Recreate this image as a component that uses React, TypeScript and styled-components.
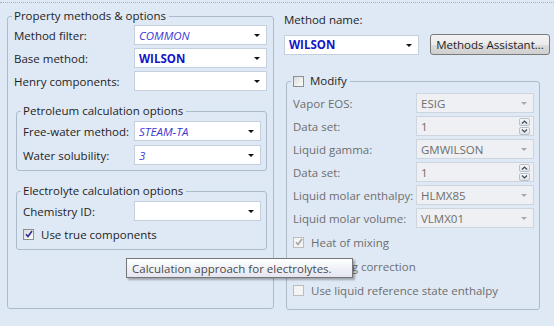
import styled, { createGlobalStyle } from 'styled-components';

const GlobalStyle = createGlobalStyle`
  html, body {
    margin: 0;
    padding: 0;
    background: #dfe9f5;
  }
`;

const Page = styled.div`
  position: relative;
  width: 554px;
  height: 326px;
  overflow: hidden;
  background: #dfe9f5;
  font-family: "Open Sans", "Noto Sans", sans-serif;
  font-size: 11.5px;
  color: #1e1e1e;
`;

const TopRule = styled.div`
  height: 2px;
  border-bottom: 1px dotted #9fb2c8;
`;

const Columns = styled.div`
  display: flex;
  gap: 10px;
  padding: 5px 0 0 7px;
`;

const LeftColumn = styled.div`
  width: 267px;
`;

const RightColumn = styled.div`
  flex: 1;
  display: flex;
  flex-direction: column;
  padding-top: 4px;
`;

const Group = styled.fieldset<{ $height?: number; $inset?: boolean }>`
  box-sizing: border-box;
  margin: 0;
  padding: 0 6px 4px 6px;
  border: 1px solid #adbccd;
  border-radius: 3px;
  min-width: 0;
  display: flex;
  flex-direction: column;
  gap: 3px;
  ${(p) => (p.$height ? `height: ${p.$height}px;` : '')}
  ${(p) => (p.$inset ? `margin: 0 0 0 2px; padding: 2px 5px 5px 6px; gap: 4px;` : '')}
`;

const Legend = styled.legend`
  margin-left: -2px;
  padding: 0 3px 0 2px;
  height: 16px;
  line-height: 16px;
  display: flex;
  align-items: center;
  gap: 6px;
`;

const Row = styled.div<{ $label: number }>`
  display: grid;
  grid-template-columns: ${(p) => p.$label}px 1fr;
  align-items: center;
  height: 20px;
`;

const Label = styled.span<{ $disabled?: boolean }>`
  white-space: nowrap;
  color: ${(p) => (p.$disabled ? '#6e6e6e' : '#1e1e1e')};
`;

const Combo = styled.div<{ $disabled?: boolean; $width?: number }>`
  box-sizing: border-box;
  position: relative;
  height: 20px;
  ${(p) => (p.$width ? `width: ${p.$width}px;` : '')}
  display: flex;
  align-items: center;
  padding: 0 14px 0 4px;
  background: ${(p) => (p.$disabled ? '#eef0f3' : '#ffffff')};
  border: 1px solid ${(p) => (p.$disabled ? '#cdd5de' : '#c4d0de')};
  color: ${(p) => (p.$disabled ? '#6e6e6e' : '#1e1e1e')};
`;

const Value = styled.span<{ $variant?: 'italic' | 'bold' }>`
  white-space: nowrap;
  color: ${(p) => (p.$variant === 'bold' ? '#1414c8' : p.$variant === 'italic' ? '#3b3bd4' : 'inherit')};
  font-style: ${(p) => (p.$variant === 'italic' ? 'italic' : 'normal')};
  font-weight: ${(p) => (p.$variant === 'bold' ? 700 : 400)};
`;

const Arrow = styled.span<{ $disabled?: boolean }>`
  position: absolute;
  right: 6px;
  top: 8px;
  width: 0;
  height: 0;
  border-left: 3px solid transparent;
  border-right: 3px solid transparent;
  border-top: 3px solid ${(p) => (p.$disabled ? '#a9a9a9' : '#111')};
`;

const Spin = styled.div`
  position: absolute;
  right: 3px;
  top: 1px;
  display: flex;
  flex-direction: column;
  gap: 1px;
`;

const SpinButton = styled.span`
  box-sizing: border-box;
  width: 11px;
  height: 8px;
  border: 1px solid #b9c1cb;
  border-radius: 2px;
  background: linear-gradient(#f7f8fa, #dfe3e8);
  display: flex;
  align-items: center;
  justify-content: center;
`;

const CheckRow = styled.label<{ $disabled?: boolean }>`
  display: flex;
  align-items: center;
  gap: 7px;
  height: 16px;
  color: ${(p) => (p.$disabled ? '#6e6e6e' : '#1e1e1e')};
`;

const Box = styled.span<{ $disabled?: boolean }>`
  box-sizing: border-box;
  width: 11px;
  height: 11px;
  flex: none;
  border: 1px solid ${(p) => (p.$disabled ? '#bcbcbc' : '#8e8f8f')};
  background: ${(p) => (p.$disabled ? '#f4f4f4' : 'linear-gradient(135deg, #dcdcdc, #fdfdfd)')};
  display: flex;
  align-items: center;
  justify-content: center;
`;

const TopLabel = styled.div`
  height: 16px;
  line-height: 16px;
`;

const NameRow = styled.div`
  display: flex;
  align-items: center;
  gap: 11px;
  margin-top: 6px;
`;

const Button = styled.div`
  box-sizing: border-box;
  width: 120px;
  height: 21px;
  border: 1px solid #7a7a7a;
  border-radius: 3px;
  background: linear-gradient(#f3f3f3 0%, #ebebeb 50%, #dddddd 51%, #cfcfcf 100%);
  display: flex;
  align-items: center;
  justify-content: center;
  white-space: nowrap;
`;

const ModifyWrap = styled.div`
  margin: 18px 0 0 2px;
  width: 254px;
`;

const Tooltip = styled.div`
  position: absolute;
  left: 126px;
  top: 258px;
  box-sizing: border-box;
  width: 227px;
  height: 20px;
  padding-left: 5px;
  display: flex;
  align-items: center;
  white-space: nowrap;
  border: 1px solid #767676;
  background: linear-gradient(#ffffff, #e4e5f0);
  box-shadow: 2px 2px 2px rgba(0, 0, 0, 0.3);
  color: #4a4a4a;
`;

function Check({ checked, disabled }: { checked?: boolean; disabled?: boolean }) {
  return (
    <Box $disabled={disabled}>
      {checked && (
        <svg width="8" height="8" viewBox="0 0 8 8">
          <path d="M1 4.2 L3 6.5 L7 1" fill="none" stroke={disabled ? '#a5a5a5' : '#2b2b8c'} strokeWidth="1.6" />
        </svg>
      )}
    </Box>
  );
}

function Dropdown({ value, variant, disabled, width }: { value?: string; variant?: 'italic' | 'bold'; disabled?: boolean; width?: number }) {
  return (
    <Combo $disabled={disabled} $width={width}>
      <Value $variant={variant}>{value}</Value>
      <Arrow $disabled={disabled} />
    </Combo>
  );
}

function Spinner({ value }: { value: string }) {
  return (
    <Combo $disabled>
      <Value>{value}</Value>
      <Spin>
        <SpinButton>
          <svg width="7" height="4" viewBox="0 0 7 4"><path d="M1 3.5 L3.5 1 L6 3.5" fill="none" stroke="#3d4a5a" strokeWidth="1.2" /></svg>
        </SpinButton>
        <SpinButton>
          <svg width="7" height="4" viewBox="0 0 7 4"><path d="M1 0.5 L3.5 3 L6 0.5" fill="none" stroke="#3d4a5a" strokeWidth="1.2" /></svg>
        </SpinButton>
      </Spin>
    </Combo>
  );
}

export default function App() {
  return (
    <Page>
      <GlobalStyle />
      <TopRule />
      <Columns>
        <LeftColumn>
          <Group $height={301}>
            <Legend>Property methods &amp; options</Legend>
            <Row $label={120} style={{ marginTop: 1 }}>
              <Label>Method filter:</Label>
              <Dropdown value="COMMON" variant="italic" />
            </Row>
            <Row $label={120}>
              <Label>Base method:</Label>
              <Dropdown value="WILSON" variant="bold" />
            </Row>
            <Row $label={120}>
              <Label>Henry components:</Label>
              <Dropdown />
            </Row>

            <Group $inset style={{ marginTop: 9 }}>
              <Legend>Petroleum calculation options</Legend>
              <Row $label={111}>
                <Label>Free-water method:</Label>
                <Dropdown value="STEAM-TA" variant="italic" />
              </Row>
              <Row $label={111}>
                <Label>Water solubility:</Label>
                <Dropdown value="3" variant="italic" />
              </Row>
            </Group>

            <Group $inset style={{ marginTop: 9, paddingBottom: 7 }}>
              <Legend>Electrolyte calculation options</Legend>
              <Row $label={111}>
                <Label>Chemistry ID:</Label>
                <Dropdown />
              </Row>
              <CheckRow style={{ marginTop: 1 }}>
                <Check checked />
                Use true components
              </CheckRow>
            </Group>
          </Group>
        </LeftColumn>

        <RightColumn>
          <TopLabel>Method name:</TopLabel>
          <NameRow>
            <Dropdown value="WILSON" variant="bold" width={135} />
            <Button>Methods Assistant...</Button>
          </NameRow>

          <ModifyWrap>
            <Group $height={237} style={{ padding: '0 5px 0 6px' }}>
              <Legend>
                <Check />
                Modify
              </Legend>
              <Row $label={123} style={{ marginTop: 4 }}>
                <Label $disabled>Vapor EOS:</Label>
                <Dropdown value="ESIG" disabled />
              </Row>
              <Row $label={123}>
                <Label $disabled>Data set:</Label>
                <Spinner value="1" />
              </Row>
              <Row $label={123}>
                <Label $disabled>Liquid gamma:</Label>
                <Dropdown value="GMWILSON" disabled />
              </Row>
              <Row $label={123}>
                <Label $disabled>Data set:</Label>
                <Spinner value="1" />
              </Row>
              <Row $label={123}>
                <Label $disabled>Liquid molar enthalpy:</Label>
                <Dropdown value="HLMX85" disabled />
              </Row>
              <Row $label={123}>
                <Label $disabled>Liquid molar volume:</Label>
                <Dropdown value="VLMX01" disabled />
              </Row>
              <CheckRow $disabled style={{ marginTop: 3 }}>
                <Check checked disabled />
                Heat of mixing
              </CheckRow>
              <CheckRow $disabled style={{ marginTop: 5 }}>
                <Check disabled />
                Poynting correction
              </CheckRow>
              <CheckRow $disabled style={{ marginTop: 5 }}>
                <Check disabled />
                Use liquid reference state enthalpy
              </CheckRow>
            </Group>
          </ModifyWrap>
        </RightColumn>
      </Columns>
      <Tooltip>Calculation approach for electrolytes.</Tooltip>
    </Page>
  );
}
